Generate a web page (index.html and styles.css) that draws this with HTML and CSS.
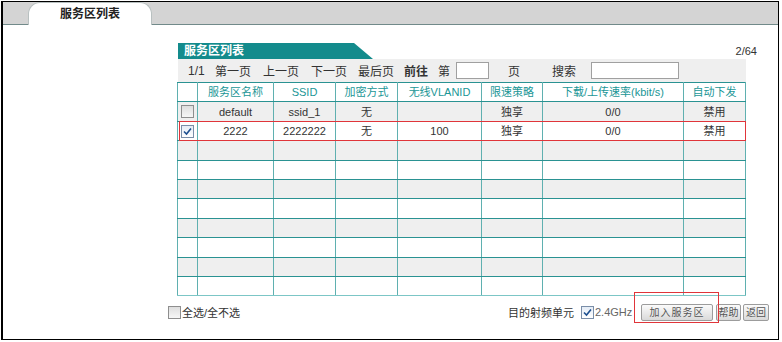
FILE: index.html
```html
<!DOCTYPE html>
<html>
    <head>
        <title>服务区列表</title>
        <link rel="stylesheet" href="styles.css">
    </head>
    <body>
        <div class='frame'>
            <div class='tabbar'>
                <div class='tab'>服务区列表</div>
            </div>
            <div class='content'>
                <div class='panel'>
                    <div class='panel-head'>
                        <div class='caption'>服务区列表</div>
                        <div class='count'>2/64</div>
                    </div>
                    <div class='pager'>
                        <span class='pg w27'>1/1</span>
                        <span class='pg w48'>第一页</span>
                        <span class='pg w48'>上一页</span>
                        <span class='pg w47'>下一页</span>
                        <span class='pg w46'>最后页</span>
                        <span class='pg w34 bold'>前往</span>
                        <span class='pg w18'>第</span>
                        <input type='text' class='box small'>
                        <span class='pg w44 ml19'>页</span>
                        <span class='pg w39'>搜索</span>
                        <input type='text' class='box wide'>
                    </div>
                    <table class='grid'>
                        <colgroup>
                            <col style='width:20px'>
                            <col style='width:76px'>
                            <col style='width:62px'>
                            <col style='width:62px'>
                            <col style='width:84px'>
                            <col style='width:61px'>
                            <col style='width:141px'>
                            <col style='width:62px'>
                        </colgroup>
                        <tr class='head'>
                            <td></td><td>服务区名称</td><td>SSID</td><td>加密方式</td><td>无线VLANID</td><td>限速策略</td><td>下载/上传速率(kbit/s)</td><td>自动下发</td>
                        </tr>
                        <tr class='odd'>
                            <td><span class='chk'></span></td><td>default</td><td>ssid_1</td><td>无</td><td></td><td>独享</td><td>0/0</td><td>禁用</td>
                        </tr>
                        <tr class='sel'>
                            <td class='first'><span class='chk on'><svg width='9' height='9' viewBox='0 0 9 9'><path d='M1 4.5 L3.5 7 L8 1.5' fill='none' stroke='#1d4f8f' stroke-width='1.6'/></svg></span></td><td>2222</td><td>2222222</td><td>无</td><td>100</td><td>独享</td><td>0/0</td><td>禁用</td>
                        </tr>
                        <tr class='odd'><td></td><td></td><td></td><td></td><td></td><td></td><td></td><td></td></tr>
                        <tr><td></td><td></td><td></td><td></td><td></td><td></td><td></td><td></td></tr>
                        <tr class='odd'><td></td><td></td><td></td><td></td><td></td><td></td><td></td><td></td></tr>
                        <tr><td></td><td></td><td></td><td></td><td></td><td></td><td></td><td></td></tr>
                        <tr class='odd'><td></td><td></td><td></td><td></td><td></td><td></td><td></td><td></td></tr>
                        <tr><td></td><td></td><td></td><td></td><td></td><td></td><td></td><td></td></tr>
                        <tr class='odd'><td></td><td></td><td></td><td></td><td></td><td></td><td></td><td></td></tr>
                        <tr><td></td><td></td><td></td><td></td><td></td><td></td><td></td><td></td></tr>
                    </table>
                </div>
                <div class='footer'>
                    <div class='selall'><span class='chk'></span>全选/全不选</div>
                    <div class='actions'>
                        <span class='label'>目的射频单元</span>
                        <span class='chk on'><svg width='9' height='9' viewBox='0 0 9 9'><path d='M1 4.5 L3.5 7 L8 1.5' fill='none' stroke='#1d4f8f' stroke-width='1.6'/></svg></span>
                        <span class='band'>2.4GHz</span>
                        <span class='addwrap'>
                            <button class='btn add'>加入服务区</button>
                            <span class='mark'></span>
                        </span>
                        <button class='btn help'>帮助</button>
                        <button class='btn back'>返回</button>
                    </div>
                </div>
            </div>
        </div>
    </body>
</html>
```

FILE: styles.css
```css
body{
    margin: 0;
    background-color: #ffffff;
    font-family: "Liberation Sans", "Noto Sans CJK SC", sans-serif;
    font-size: 12px;
    color: #333333;
}
.frame{
    margin: 1px 0 0 1px;
    width: 778px;
    height: 339px;
    box-sizing: border-box;
    border: 1px solid #000000;
    border-left-width: 2px;
}
.tabbar{
    height: 22px;
    background-color: #d4d4d4;
    border-bottom: 1px solid #718a8a;
    padding-left: 25px;
    display: flex;
    align-items: flex-end;
}
.tab{
    width: 122px;
    height: 22px;
    margin-bottom: -1px;
    background-color: #ffffff;
    border: 1px solid #b8c0c0;
    border-bottom: none;
    border-radius: 12px 12px 0 0;
    text-align: center;
    line-height: 22px;
    font-weight: bold;
    color: #222222;
}
.content{
    padding-left: 165px;
}
.panel{
    margin-top: 18px;
    margin-left: 9px;
    width: 580px;
}
.panel-head{
    display: flex;
    justify-content: space-between;
    align-items: flex-end;
    height: 16px;
}
.caption{
    margin-left: 1px;
    width: 195px;
    height: 16px;
    line-height: 16px;
    padding-left: 6px;
    box-sizing: border-box;
    background-color: #138b8c;
    color: #ffffff;
    font-weight: bold;
    clip-path: polygon(0 0, 176px 0, 195px 100%, 0 100%);
}
.count{
    font-size: 11px;
    line-height: 12px;
    height: 12px;
    align-self: flex-start;
    margin-top: 2px;
}
.pager{
    margin-left: 1px;
    width: 568px;
    height: 23px;
    background-color: #efefef;
    display: flex;
    align-items: center;
    padding-left: 10px;
    box-sizing: border-box;
}
.pg{
    display: inline-block;
    flex: none;
}
.w27{ width: 27px; }
.w48{ width: 48px; }
.w47{ width: 47px; }
.w46{ width: 46px; }
.w44{ width: 44px; }
.w39{ width: 39px; }
.w34{ width: 34px; }
.w18{ width: 18px; }
.ml19{ margin-left: 19px; }
.bold{ font-weight: bold; }
.box{
    height: 17px;
    box-sizing: border-box;
    border: 1px solid #a0a0a0;
    background-color: #ffffff;
    padding: 0;
    margin: 0;
}
.small{ width: 33px; }
.wide{ width: 88px; }
.grid{
    border-collapse: collapse;
    table-layout: fixed;
    width: 569px;
    font-size: 11px;
}
.grid td{
    border-left: 1px solid #5fb0b0;
    border-right: 1px solid #5fb0b0;
    border-top: 1px solid #2a9292;
    border-bottom: 1px solid #2a9292;
    height: 18.4px;
    padding: 0;
    text-align: center;
    line-height: 18px;
    white-space: nowrap;
    overflow: hidden;
}
.grid tr:last-child td{
    border-bottom-color: #7cc6c6;
}
.head td{
    color: #1a9696;
}
.odd td{
    background-color: #efefef;
}
.grid td.first{
    position: relative;
    overflow: visible;
}
.grid td.first::after{
    content: '';
    position: absolute;
    left: 1px;
    top: -1px;
    width: 567px;
    height: 20px;
    box-sizing: border-box;
    border: 1px solid #e0353a;
}
.chk{
    display: inline-block;
    width: 11px;
    height: 11px;
    border: 1px solid #8e8e8e;
    background: linear-gradient(#dedede, #f6f6f6);
    vertical-align: middle;
    position: relative;
    top: -1px;
}
.chk.on{
    border-color: #7a8ea8;
    background: linear-gradient(#e4ecf6, #ffffff);
}
.chk svg{
    display: block;
    margin: 1px;
}
.footer{
    margin-top: 5px;
    width: 601px;
    height: 22px;
    display: flex;
    justify-content: space-between;
    align-items: center;
    font-size: 11px;
}
.selall{
    display: flex;
    align-items: center;
    gap: 1px;
}
.selall .chk{
    top: 0;
}
.actions{
    display: flex;
    align-items: center;
}
.actions .chk{
    top: 0;
}
.label{
    margin-right: 7px;
}
.band{
    margin-left: 1px;
    width: 35px;
    color: #666666;
    margin-right: 11px;
    white-space: nowrap;
}
.addwrap{
    position: relative;
    display: flex;
}
.btn{
    height: 17px;
    padding: 0;
    margin: 0;
    border: 1px solid #9c9c9c;
    border-radius: 2px;
    background: linear-gradient(#fbfbfb, #d9d9d9);
    font-family: "Liberation Sans", "Noto Sans CJK SC", sans-serif;
    font-size: 10px;
    color: #555555;
    line-height: 15px;
    white-space: nowrap;
    text-align: center;
}
.btn.add{
    width: 72px;
    letter-spacing: 1px;
}
.btn.help{
    width: 25px;
    margin-left: 3px;
}
.btn.back{
    width: 26px;
    margin-left: 2px;
}
.mark{
    position: absolute;
    left: -7px;
    top: -12px;
    width: 85px;
    height: 31px;
    box-sizing: border-box;
    border: 1px solid #e0353a;
}
```
